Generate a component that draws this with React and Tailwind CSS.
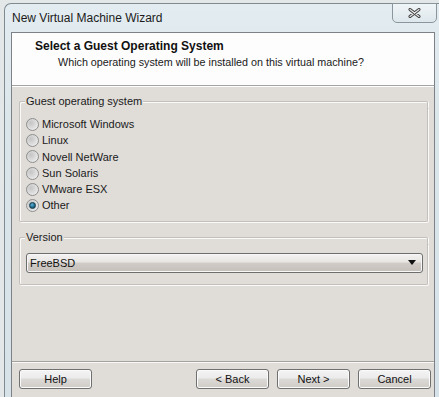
import React from 'react';

const options = ['Microsoft Windows', 'Linux', 'Novell NetWare', 'Sun Solaris', 'VMware ESX', 'Other'];

const Radio = ({ checked }) => (
  <div className="w-[13px] h-[13px] rounded-full border border-[#8d8d8d] bg-[radial-gradient(circle_at_35%_35%,#c4c4c4_0%,#dadada_45%,#f6f6f6_100%)] flex items-center justify-center shrink-0">
    {checked && (
      <div className="w-[7px] h-[7px] rounded-full bg-[radial-gradient(circle_at_40%_35%,#5fb4d4_0%,#1f6b8c_55%,#0d3b52_100%)] border border-[#123a4c]" />
    )}
  </div>
);

const WinButton = ({ children }) => (
  <button className="w-[73px] h-[20px] rounded-[3px] border border-[#707070] bg-[linear-gradient(to_bottom,#f4f4f4_0%,#ebebeb_45%,#dcdad7_50%,#cfcbc7_100%)] text-[11px] leading-[18px] text-[#111] shadow-[inset_0_0_0_1px_#fbfbfb]">
    {children}
  </button>
);

// etched group box: top edge is split around the caption
const GroupBox = ({ title, className, children }) => (
  <div className={`w-[409px] ${className}`}>
    <div className="h-[14px] flex">
      <div className="w-[6px] h-[7px] mt-[7px] border-l border-t border-[#c3c0bc] rounded-tl-[2px] shadow-[inset_1px_1px_0_#fafafa]" />
      <span className="px-[1px] text-[11px] leading-[14px] text-[#1a1a1a]">{title}</span>
      <div className="flex-1 h-[7px] mt-[7px] border-r border-t border-[#c3c0bc] rounded-tr-[2px] shadow-[inset_0_1px_0_#fafafa,1px_0_0_#fafafa]" />
    </div>
    <div className="border-l border-r border-b border-[#c3c0bc] rounded-b-[2px] px-[6px] shadow-[inset_1px_0_0_#fafafa,1px_1px_0_#fafafa]">
      {children}
    </div>
  </div>
);

export default function App() {
  return (
    <div className="w-[439px] h-[397px] overflow-hidden bg-[#e4e7e8] font-['Liberation_Sans',Arial,sans-serif]">
      {/* window frame */}
      <div className="ml-[4px] mt-[3px] w-[440px] h-[400px] border-l border-t border-[#7f8a91] rounded-tl-[7px] bg-[linear-gradient(to_bottom,#e3ecf0_0%,#dbe6eb_30%,#d6e2e8_100%)]">
        {/* title bar */}
        <div className="h-[28px] flex items-start justify-between">
          <div className="pl-[7px] h-[28px] flex items-center text-[12px] text-[#1b1b1b]">New Virtual Machine Wizard</div>
          <div className="mr-[7px] -mt-[1px] w-[45px] h-[20px] rounded-b-[5px] border border-[#8a969c] bg-[linear-gradient(to_bottom,#f0f5f7,#dde7ec)] flex items-center justify-center">
            <svg width="13" height="10" viewBox="0 0 13 10">
              <path d="M2 1.5 L11 8.5 M11 1.5 L2 8.5" stroke="#3c3c3c" strokeWidth="3" strokeLinecap="round" />
              <path d="M2 1.5 L11 8.5 M11 1.5 L2 8.5" stroke="#e6e6e6" strokeWidth="1.2" strokeLinecap="round" />
            </svg>
          </div>
        </div>

        {/* client area */}
        <div className="ml-[6px] w-[424px] h-[372px] border border-[#7c8287] bg-[#e0ddd9] flex flex-col">
          {/* header */}
          <div className="h-[53px] bg-[#fdfdfd] border-b border-[#a3a3a3] pt-[6px]">
            <div className="pl-[23px] text-[12px] leading-[14px] font-bold text-[#111]">Select a Guest Operating System</div>
            <div className="pl-[46px] mt-[2px] text-[10.75px] leading-[14px] text-[#1a1a1a]">Which operating system will be installed on this virtual machine?</div>
          </div>

          {/* body */}
          <div className="px-[7px] border-t border-white">
            <GroupBox title="Guest operating system" className="mt-[7px]">
              <div className="pt-[8px] pb-[7px] flex flex-col">
                {options.map((o, i) => (
                  <div key={o} className="h-[16.3px] flex items-center gap-[3px] text-[11px] text-[#1a1a1a]">
                    <Radio checked={i === options.length - 1} />
                    <span>{o}</span>
                  </div>
                ))}
              </div>
            </GroupBox>

            <GroupBox title="Version" className="mt-[8px]">
              <div className="pt-[9px] pb-[11px]">
                <div className="w-[397px] h-[20px] rounded-[3px] border border-[#6e6e6e] bg-[linear-gradient(to_bottom,#f3f2f1_0%,#e8e6e3_45%,#d1ccc7_50%,#c4bfb9_100%)] flex items-center justify-between pl-[3px] pr-[6px] shadow-[inset_0_0_0_1px_#f7f7f7]">
                  <span className="text-[11px] text-[#111]">FreeBSD</span>
                  <svg width="8" height="5" viewBox="0 0 8 5">
                    <path d="M0 0 L8 0 L4 5 Z" fill="#111" />
                  </svg>
                </div>
              </div>
            </GroupBox>
          </div>

          {/* footer */}
          <div className="mt-auto h-[42px] border-t border-[#a5a29e] shadow-[inset_0_1px_0_#f8f8f8] pt-[7px] pl-[7px] pr-[3px] flex items-start">
            <WinButton>Help</WinButton>
            <div className="ml-auto flex gap-[8px]">
              <WinButton>&lt; Back</WinButton>
              <WinButton>Next &gt;</WinButton>
              <WinButton>Cancel</WinButton>
            </div>
          </div>
        </div>
      </div>
    </div>
  );
}
